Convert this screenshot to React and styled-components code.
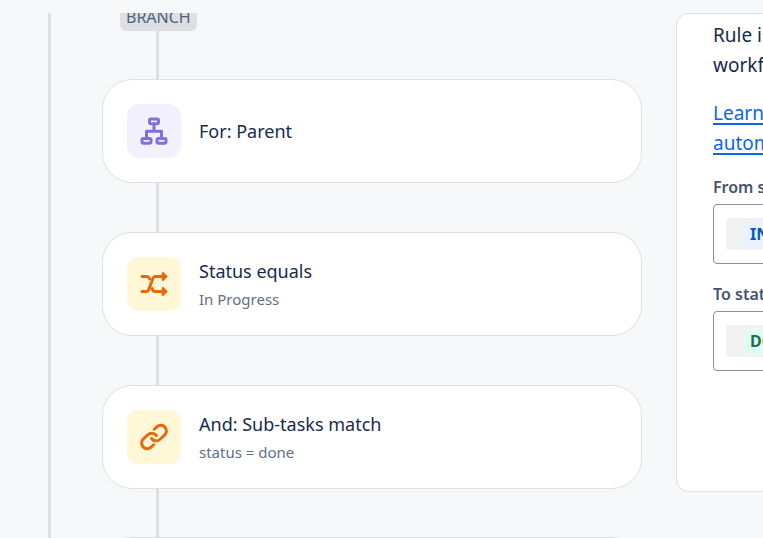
import React from 'react';
import styled, { createGlobalStyle } from "styled-components";

const GlobalStyle = createGlobalStyle`
    * {
        box-sizing: border-box;
    }

    body {
        margin: 0;
        background-color: #F7F8FA;
        font-family: 'Noto Sans', 'Open Sans', sans-serif;
        color: #172B4D;
    }
`

const Page = styled.div`
    display: flex;
    align-items: flex-start;
    gap: 34px;
    height: 100vh;
    padding: 13px 0 0 48px;
    overflow: hidden;
`

const Canvas = styled.main`
    flex: 1 0 594px;
    padding-left: 51px;
    border-left: 3px solid #DCDFE6;
    height: 100%;
    overflow: hidden;
`

const Chain = styled.div`
    display: flex;
    flex-direction: column;
    margin-top: -7px;
`

const Connector = styled.div`
    width: 3px;
    height: ${props => props.$short ? 48 : 49}px;
    flex: none;
    margin-left: 54px;
    background-color: #DCDFE6;
`

const BranchTag = styled.div`
    align-self: flex-start;
    margin-left: 18px;
    padding: 0 6px 3px;
    border-radius: 6px;
    background-color: #DCDFE4;
    color: #505F79;
    font-size: 16px;
    line-height: 22px;
`

const Card = styled.button`
    display: flex;
    flex: none;
    align-items: center;
    gap: 18px;
    width: 100%;
    height: 104px;
    padding: 0 24px;
    border: 1px solid #DCDFE4;
    border-radius: 30px;
    background-color: white;
    color: inherit;
    font-family: inherit;
    text-align: left;
`

const IconTile = styled.span`
    display: flex;
    align-items: center;
    justify-content: center;
    width: 54px;
    height: 54px;
    border-radius: 12px;
    background-color: ${props => props.$tone === "purple" ? "#F3F0FF" : "#FFF7D6"};
    color: ${props => props.$tone === "purple" ? "#8270DB" : "#E56910"};
`

const CardText = styled.span`
    display: flex;
    flex-direction: column;
`

const Title = styled.span`
    font-size: 18px;
    line-height: 30px;
`

const Detail = styled.span`
    color: #626F86;
    font-size: 15px;
    line-height: 26px;
`

const Panel = styled.aside`
    flex: 0 0 400px;
    height: 479px;
    padding: 6px 36px;
    border: 1px solid #DCDFE4;
    border-radius: 12px;
    background-color: white;
    overflow: hidden;
`

const Paragraph = styled.p`
    margin: 0 0 18px;
    font-size: 19px;
    line-height: 30px;
`

const Link = styled.a`
    color: #0C66E4;
    text-underline-offset: 3px;
    text-decoration-thickness: 2px;
`

const Field = styled.div`
    display: flex;
    flex-direction: column;
    margin-bottom: 19px;
`

const Label = styled.label`
    color: #44546F;
    font-size: 16px;
    font-weight: 600;
    line-height: 22px;
    margin-bottom: 6px;
`

const StatusBox = styled.button`
    display: flex;
    align-items: center;
    height: 60px;
    padding: 0 12px;
    border: 1px solid #8590A2;
    border-radius: 4px;
    background-color: white;
    font-family: inherit;
`

const Chip = styled.span`
    display: flex;
    align-items: center;
    height: 32px;
    padding: 0 18px;
    border-radius: 3px;
    background-color: #F1F2F4;
`

const Lozenge = styled.span`
    padding: 0 6px;
    border-radius: 4px;
    background-color: ${props => props.$done ? "#DCFFF1" : "#E9F2FF"};
    color: ${props => props.$done ? "#216E4E" : "#0055CC"};
    font-size: 16px;
    font-weight: 700;
    line-height: 24px;
`

const BranchIcon = () => (
    <svg width="28" height="28" viewBox="0 0 28 28" fill="none" stroke="currentColor" strokeWidth="3" strokeLinecap="round" strokeLinejoin="round" aria-hidden="true">
        <rect x="9.5" y="2" width="9" height="4.8" rx="1.5" />
        <rect x="2" y="21.5" width="9" height="4.8" rx="1.5" />
        <rect x="17" y="21.5" width="9" height="4.8" rx="1.5" />
        <path d="M14 7v7M6.500 21v-6.800h15V21" />
    </svg>
)

const ShuffleIcon = () => (
    <svg width="28" height="28" viewBox="0 0 28 28" fill="none" stroke="currentColor" strokeWidth="3" strokeLinecap="round" strokeLinejoin="round" aria-hidden="true">
        <path d="M2 6.500h4.500c1.300 0 2.100.5 2.700 1.600l.4.900" />
        <path d="M2 21.500h4.200c1.200 0 2-.6 2.400-1.600L13 8.200c.4-1.100 1.200-1.700 2.400-1.700H24" />
        <path d="M12 18.500l.6 1.300c.5 1.100 1.300 1.700 2.500 1.700H24" />
        <path d="M22.800 3l3.700 3.500-3.700 3.500zM22.800 18l3.700 3.500-3.700 3.500z" fill="currentColor" strokeWidth="2.200" />
    </svg>
)

const LinkIcon = () => (
    <svg width="30" height="30" viewBox="0 0 24 24" fill="none" stroke="currentColor" strokeWidth="2.400" strokeLinecap="round" strokeLinejoin="round" aria-hidden="true">
        <path d="M10 13.200a4.600 4.600 0 0 0 6.900.6l3.600-3.300a4.500 4.500 0 0 0-6.200-6.600l-2.100 1.900" />
        <path d="M14 10.800a4.600 4.600 0 0 0-6.900-.6l-3.600 3.300a4.500 4.500 0 0 0 6.200 6.600l2.100-1.900" />
    </svg>
)

const steps = [
    { icon: <BranchIcon />, tone: "purple", title: "For: Parent" },
    { icon: <ShuffleIcon />, tone: "yellow", title: "Status equals", detail: "In Progress" },
    { icon: <LinkIcon />, tone: "yellow", title: "And: Sub-tasks match", detail: "status = done" },
]

const Step = props => {
  return (
    <>
        <Connector $short={props.first} />
        <Card type="button">
            <IconTile $tone={props.tone}>{props.icon}</IconTile>
            <CardText>
                <Title>{props.title}</Title>
                {props.detail && <Detail>{props.detail}</Detail>}
            </CardText>
        </Card>
    </>
  )
}

const StatusField = props => {
  return (
    <Field>
        <Label htmlFor={props.id}>{props.label}</Label>
        <StatusBox id={props.id} type="button">
            <Chip>
                <Lozenge $done={props.done}>{props.value}</Lozenge>
            </Chip>
        </StatusBox>
    </Field>
  )
}

const App = () => {
  return (
    <>
        <GlobalStyle />
        <Page>
            <Canvas>
                <Chain>
                    <BranchTag>BRANCH</BranchTag>
                    {steps.map((step, i) => <Step key={step.title} first={i === 0} {...step} />)}
                    <Connector $short />
                    <Card type="button" aria-label="Next step" />
                </Chain>
            </Canvas>
            <Panel>
                <Paragraph>
                    Rule is run when the<br />
                    workflow status changes
                </Paragraph>
                <Paragraph>
                    <Link href="#">
                        Learn more about<br />
                        automation triggers
                    </Link>
                </Paragraph>
                <StatusField id="from-status" label="From status" value="IN PROGRESS" />
                <StatusField id="to-status" label="To status" value="DONE" done />
            </Panel>
        </Page>
    </>
  )
}

export default App;
